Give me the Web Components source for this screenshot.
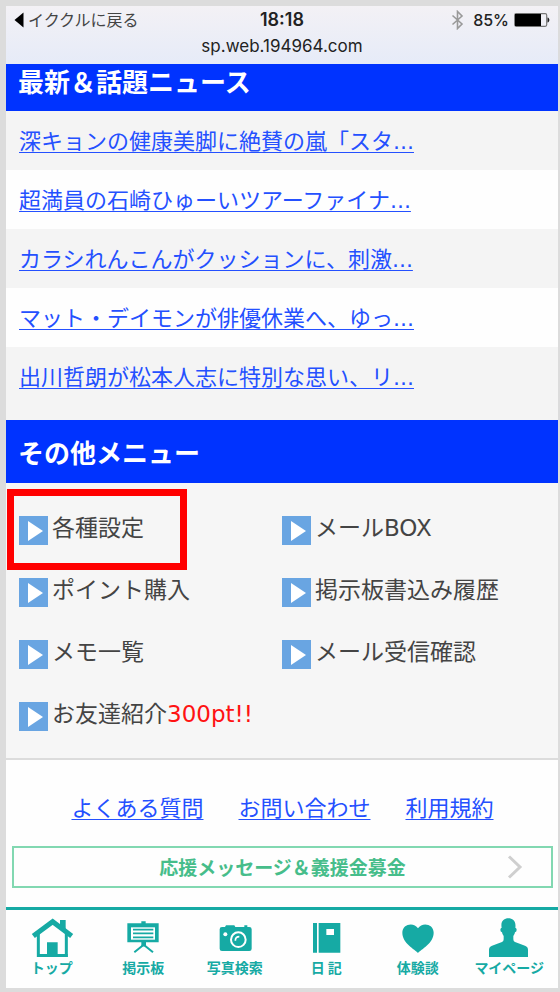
<!DOCTYPE html>
<html lang="ja">
<head>
<meta charset="utf-8">
<meta name="viewport" content="width=device-width, initial-scale=1">
<title>イククル</title>
<style>
html {
    background: #dcdcdc;
}

body {
    margin: 0;
    padding: 6px 2px 4px 6px;
    font-family: "DejaVu Sans", "Noto Sans CJK JP", sans-serif;
    color: #444;
    --blue: #0033ff;
    --link: #2450ff;
    --teal: #16aaa4;
    --green: #46bd8a;
    --panel: #f6f6f6;
}
</style>
</head>
<body>
<site-page>
    <status-bar back="イククルに戻る" time="18:18" host="sp.web.194964.com" battery="85%"></status-bar>

    <section-title scrolled>最新＆話題ニュース</section-title>
    <news-list>
        <news-item>深キョンの健康美脚に絶賛の嵐「スタ...</news-item>
        <news-item>超満員の石崎ひゅーいツアーファイナ...</news-item>
        <news-item>カラシれんこんがクッションに、刺激...</news-item>
        <news-item>マット・デイモンが俳優休業へ、ゆっ...</news-item>
        <news-item>出川哲朗が松本人志に特別な思い、リ...</news-item>
    </news-list>

    <section-title>その他メニュー</section-title>
    <menu-grid>
        <menu-item marked>各種設定</menu-item>
        <menu-item>メールBOX</menu-item>
        <menu-item>ポイント購入</menu-item>
        <menu-item>掲示板書込み履歴</menu-item>
        <menu-item>メモ一覧</menu-item>
        <menu-item>メール受信確認</menu-item>
        <menu-item>お友達紹介<span slot="bonus">300pt!!</span></menu-item>
    </menu-grid>

    <page-footer></page-footer>

    <tab-bar>
        <tab-item icon="home">トップ</tab-item>
        <tab-item icon="board">掲示板</tab-item>
        <tab-item icon="camera">写真検索</tab-item>
        <tab-item icon="book">日 記</tab-item>
        <tab-item icon="heart">体験談</tab-item>
        <tab-item icon="person">マイページ</tab-item>
    </tab-bar>
</site-page>

<script>
class BaseElement extends HTMLElement {
  connectedCallback() {
    if (this.shadowRoot) return;
    const template = document.createElement("template");
    template.innerHTML = this.render();
    this.attachShadow({ mode: "open" });
    this.shadowRoot.appendChild(template.content.cloneNode(true));
  }
}

class SitePage extends BaseElement {
  render() {
    return /*html*/ `
<style>
:host {
    display: block;
    background: #fefefe;
}
</style>
<slot></slot>`;
  }
}

class StatusBar extends BaseElement {
  render() {
    return /*html*/ `
<style>
:host {
    display: block;
    padding: 0 8px 6px;
    background: linear-gradient(#f3f1f5, #e6ebf8);
    font-family: Inter, "Noto Sans CJK JP", sans-serif;
    font-size: 16px;
    color: #222;
}

.row {
    display: grid;
    grid-template-columns: 1fr auto 1fr;
    align-items: center;
    line-height: 28px;
}

.back {
    display: flex;
    align-items: center;
    gap: 4px;
    color: #444;
    text-decoration: none;
}

.time {
    font-size: 18px;
    font-weight: 600;
}

.power {
    display: flex;
    justify-content: flex-end;
    align-items: center;
    gap: 5px;
    font-weight: 500;
}

.bluetooth {
    margin-right: 4px;
}

.host {
    font-size: 17px;
    line-height: 24px;
    text-align: center;
}

svg {
    display: block;
}
</style>
<div class="row">
    <a class="back" href="#">
        <svg width="10" height="16" viewBox="0 0 10 16"><path d="M9.500 .5v15L.5 8z" fill="#000"/></svg>
        <span>${this.getAttribute("back")}</span>
    </a>
    <span class="time">${this.getAttribute("time")}</span>
    <span class="power">
        <svg class="bluetooth" width="13" height="20" viewBox="0 0 13 20" fill="none" stroke="#999" stroke-width="1.600"><path d="M1.500 5.500l9.500 8.500-4.500 4.500v-17L11 6l-9.500 8.500"/></svg>
        <span>${this.getAttribute("battery")}</span>
        <svg width="36" height="14" viewBox="0 0 36 14"><rect x=".7" y=".7" width="32" height="12.600" rx="1.500" fill="none" stroke="#777" stroke-width="1.200"/><rect x="1" y="1" width="26" height="12" fill="#000"/><path d="M33.500 4.500c2.500 .5 2.500 4.500 0 5z" fill="#222"/></svg>
    </span>
</div>
<div class="host">${this.getAttribute("host")}</div>`;
  }
}

class SectionTitle extends BaseElement {
  render() {
    return /*html*/ `
<style>
:host {
    display: block;
    padding: 15px 12px 14px;
    background: var(--blue);
    color: white;
}

/* top padding is hidden behind the status bar */
:host([scrolled]) {
    padding-top: 0;
    padding-bottom: 13px;
}

h2 {
    margin: 0;
    font-family: "Noto Sans CJK JP", sans-serif;
    font-size: 26px;
    font-weight: 700;
    line-height: 34px;
}
</style>
<h2><slot></slot></h2>`;
  }
}

class NewsList extends BaseElement {
  render() {
    return /*html*/ `
<style>
:host {
    display: block;
    padding-bottom: 14px;
    background: #f4f4f4;
}

::slotted(news-item:nth-child(even)) {
    background: #fefefe;
}
</style>
<slot></slot>`;
  }
}

class NewsItem extends BaseElement {
  render() {
    return /*html*/ `
<style>
:host {
    display: block;
    padding: 2px 13px 0;
}

a {
    color: var(--link);
    font-size: 22px;
    line-height: 57px;
    text-decoration-thickness: 1px;
    text-underline-offset: 3px;
    text-decoration-skip-ink: none;
}
</style>
<a href="#"><slot></slot></a>`;
  }
}

class MenuGrid extends BaseElement {
  render() {
    return /*html*/ `
<style>
:host {
    display: grid;
    grid-template-columns: repeat(2, 1fr);
    grid-auto-rows: 62px;
    padding: 14px 13px 13px;
    background: var(--panel);
    border-bottom: 2px solid #dcdcdc;
}
</style>
<slot></slot>`;
  }
}

class MenuItem extends BaseElement {
  render() {
    return /*html*/ `
<style>
:host {
    display: flex;
    align-items: center;
    position: relative;
}

a {
    display: flex;
    align-items: center;
    gap: 4px;
    color: #444;
    font-size: 23px;
    line-height: 28px;
    text-decoration: none;
    white-space: nowrap;
}

svg {
    display: block;
    margin-top: 4px;
}

::slotted([slot="bonus"]) {
    color: #ff1212;
}

.mark {
    display: none;
}

/* red frame drawn over the panel */
:host([marked]) .mark {
    display: block;
    position: absolute;
    top: -8px;
    left: -12px;
    width: 166px;
    height: 67px;
    border: 7px solid #ff0000;
    pointer-events: none;
}
</style>
<a href="#">
    <svg width="29" height="29" viewBox="0 0 29 29"><path d="M0 0h29v29H0z" fill="#69a5e2"/><path d="M9 5l15 10-15 10z" fill="#fff"/></svg>
    <span><slot></slot><slot name="bonus"></slot></span>
</a>
<div class="mark"></div>`;
  }
}

class PageFooter extends BaseElement {
  render() {
    return /*html*/ `
<style>
:host {
    display: block;
    padding: 33px 5px 19px 6px;
}

nav {
    display: flex;
    justify-content: center;
    gap: 35px;
    margin-bottom: 21px;
}

nav a {
    color: var(--link);
    font-size: 22px;
    line-height: 32px;
    text-decoration-thickness: 1px;
    text-underline-offset: 3px;
    text-decoration-skip-ink: none;
}

.banner {
    display: grid;
    grid-template-columns: 1fr auto 1fr;
    align-items: center;
    padding: 0 28px;
    border: 2px solid #82d8b1;
    color: var(--green);
    font-family: "Noto Sans CJK JP", sans-serif;
    font-size: 19px;
    font-weight: 700;
    line-height: 38px;
    text-decoration: none;
}

.banner span {
    grid-column: 2;
}

.banner svg {
    justify-self: end;
}
</style>
<nav>
    <a href="#">よくある質問</a>
    <a href="#">お問い合わせ</a>
    <a href="#">利用規約</a>
</nav>
<a class="banner" href="#">
    <span>応援メッセージ＆義援金募金</span>
    <svg width="16" height="24" viewBox="0 0 16 24" fill="none" stroke="#cfcfcf" stroke-width="3"><path d="M2 1.500L13 12 2 22.500"/></svg>
</a>`;
  }
}

class TabBar extends BaseElement {
  render() {
    return /*html*/ `
<style>
:host {
    display: grid;
    grid-template-columns: repeat(6, 1fr);
    padding: 7px 3px 10px 0;
    border-top: 3px solid var(--teal);
}
</style>
<slot></slot>`;
  }
}

const ICONS = {
  home: `
    <path d="M96 9h17v34L96 28z"/>
    <path d="M16 57L74 14l57 43" fill="none" stroke="currentColor" stroke-width="15"/>
    <path d="M31 50v66h84V50" fill="none" stroke="currentColor" stroke-width="9"/>
    <path d="M27 111h92v9H27zM57 76h32v44H57z"/>`,
  board: `
    <path d="M67 13h13v10H67zM25 19h94v57H25z"/>
    <path d="M36 31h72v37H36z" fill="#fff"/>
    <path d="M42 38h61M42 49h61M42 61h61" stroke="currentColor" stroke-width="5"/>
    <path d="M67 74h14v14H67z"/>
    <path d="M74 83l-28 23M74 83l28 23" stroke="currentColor" stroke-width="6"/>`,
  camera: `
    <path d="M33 30h9l3-5h25l3 5h27v-5h9v5h6q7 0 7 7v58q0 7-7 7H33q-7 0-7-7V37q0-7 7-7z"/>
    <circle cx="43" cy="52" r="6" fill="#fff"/>
    <circle cx="82" cy="68" r="22" fill="none" stroke="#fff" stroke-width="6"/>
    <path d="M73 71q0-12 12-12" fill="none" stroke="#fff" stroke-width="5"/>`,
  book: `
    <path d="M33 18h12v89H33zM50 18h65v89H50z"/>
    <path d="M73 36h23v18H73z" fill="#fff"/>`,
  heart: `
    <path d="M72 108C63 97 25 79 25 47c0-27 35-33 47-13 12-20 47-14 47 13 0 32-38 50-47 61z"/>`,
  person: `
    <path d="M12 120V98q0-9 9-12l30-11q5-2 5-8V57q-4-4-5-11-5-1-5-8 0-5 4-6C46 13 57 4 70 4s24 9 21 28q4 1 4 6 0 7-5 8-1 7-5 11v10q0 6 5 8l30 11q9 3 9 12v22z"/>`,
};

class TabItem extends BaseElement {
  render() {
    return /*html*/ `
<style>
:host {
    display: block;
}

a {
    display: flex;
    flex-direction: column;
    align-items: center;
    color: var(--teal);
    font-family: "Noto Sans CJK JP", sans-serif;
    font-size: 14px;
    font-weight: 700;
    line-height: 21px;
    text-decoration: none;
    white-space: nowrap;
}

svg {
    display: block;
    fill: currentColor;
}
</style>
<a href="#">
    <svg width="48" height="40" viewBox="0 0 144 120">${ICONS[this.getAttribute("icon")]}</svg>
    <span><slot></slot></span>
</a>`;
  }
}

customElements.define("site-page", SitePage);
customElements.define("status-bar", StatusBar);
customElements.define("section-title", SectionTitle);
customElements.define("news-list", NewsList);
customElements.define("news-item", NewsItem);
customElements.define("menu-grid", MenuGrid);
customElements.define("menu-item", MenuItem);
customElements.define("page-footer", PageFooter);
customElements.define("tab-bar", TabBar);
customElements.define("tab-item", TabItem);
</script>
</body>
</html>
